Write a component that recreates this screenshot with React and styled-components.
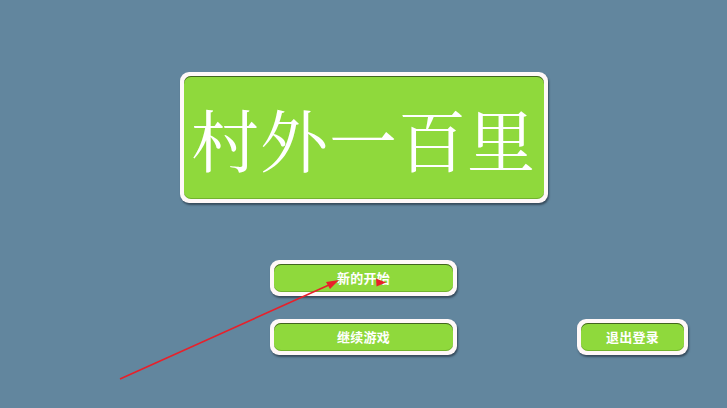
import React from "react";
import styled, { createGlobalStyle } from "styled-components";

const Global = createGlobalStyle`
  html, body { margin: 0; padding: 0; }
  body { background: #62869e; font-family: "Noto Sans CJK SC", "Noto Sans", sans-serif; }
`;

const Page = styled.div`
  position: relative;
  width: 727px;
  height: 408px;
  overflow: hidden;
  background: #62869e;
  display: flex;
  flex-direction: column;
  align-items: center;
  padding-top: 72px;
  box-sizing: border-box;
`;

const Frame = styled.div`
  background: #fff8f8;
  padding: 4px;
  border-radius: ${(p) => p.$radius || 9}px;
  box-shadow: 1px 2px 2px rgba(20, 30, 40, 0.55);
  box-sizing: border-box;
  width: ${(p) => p.$w}px;
  height: ${(p) => p.$h}px;
  display: flex;
`;

const Green = styled.div`
  flex: 1;
  background: #8fd93c;
  border-radius: ${(p) => p.$radius || 6}px;
  box-shadow: inset 0 1px 0 rgba(40, 60, 20, 0.75), inset 0 -1px 0 rgba(60, 110, 20, 0.35);
  display: flex;
  align-items: center;
  justify-content: center;
  color: #ffffff;
`;

const Title = styled.h1`
  margin: 0;
  font-family: "Noto Serif CJK SC", "Noto Sans CJK SC", serif;
  font-weight: 400;
  font-size: 68px;
  line-height: 1;
  letter-spacing: 1px;
  color: #ffffff;
`;

const Menu = styled.div`
  margin-top: 57px;
  width: 100%;
  display: grid;
  grid-template-columns: 1fr auto 1fr;
  row-gap: 23px;
`;

const Center = styled.div`
  grid-column: 2;
`;

const Right = styled.div`
  grid-column: 3;
  justify-self: start;
  margin-left: 120px;
`;

const Label = styled.span`
  font-family: "Noto Sans CJK SC", sans-serif;
  font-weight: 700;
  font-size: 13px;
  line-height: 1;
  margin-top: -2px;
  color: #ffffff;
  letter-spacing: 0.3px;
`;

const Overlay = styled.svg`
  position: absolute;
  left: 0;
  top: 0;
  pointer-events: none;
`;

function Button({ w, children }) {
  return (
    <Frame $w={w} $h={36} $radius={9}>
      <Green $radius={7}>
        <Label>{children}</Label>
      </Green>
    </Frame>
  );
}

export default function App() {
  return (
    <>
      <Global />
      <Page>
        <Frame $w={368} $h={131} $radius={9}>
          <Green $radius={7}>
            <Title>村外一百里</Title>
          </Green>
        </Frame>
        <Menu>
          <Center>
            <Button w={187}>新的开始</Button>
          </Center>
          <Center>
            <Button w={187}>继续游戏</Button>
          </Center>
          <Right>
            <Button w={111}>退出登录</Button>
          </Right>
        </Menu>
        <Overlay width="727" height="408" viewBox="0 0 727 408">
          <line x1="120" y1="379" x2="330" y2="284.5" stroke="#e8202a" strokeWidth="1.6" />
          <polygon points="339,280 326,282 330,289" fill="#e8202a" />
          <polygon points="386,282.5 376,278.5 376.5,286.5" fill="#e8202a" />
        </Overlay>
      </Page>
    </>
  );
}
